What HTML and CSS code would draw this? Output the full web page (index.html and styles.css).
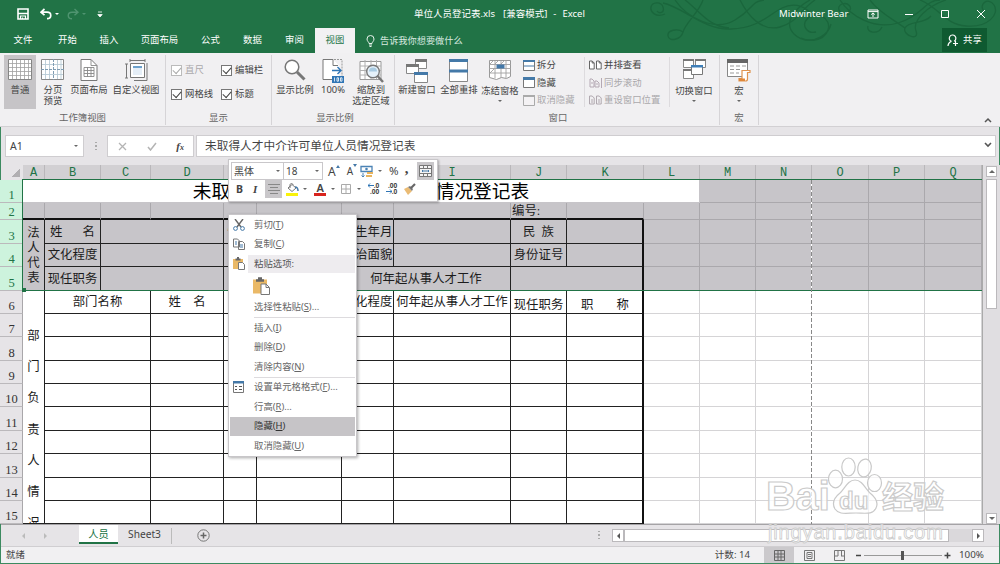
FILE: index.html
```html
<!DOCTYPE html>
<html lang="zh-CN">
<head>
<meta charset="utf-8">
<title>单位人员登记表.xls - Excel</title>
<link rel="stylesheet" href="styles.css">
</head>
<body>
<div class="window">
  <header class="top">
    <svg class="swirls" width="350" height="44" viewBox="0 0 350 44">
      <path d="M15 14C6 18 0 12 1 7s10-6 12 0-4 7-6 4M13 3c20 4 40 27 68 26S118 15 132 8s26 0 30 8M25 0c12 18 40 32 60 20S100 2 114 0M53 0c-4 12-18 24-20 32s-14 10-15 4 10-8 15-4M35 0c14 10 22 26 44 28M90 0c8 16 22 32 40 27s20-17 35-27M160 0c-18 10-26 24-16 34s30 8 34-4-12-20-20-12 0 16 8 14M151 38c14 6 28-4 30-14M200 14c-12 2-14-8-8-10s12 4 6 8M190 0c10 16 34 30 58 23S275 0 290 0M220 0c8 12 24 20 35 28M296 0c-18 6-34 20-30 31s-14 4-11-3 20-4 26-12M270 0c20 8 24 24 46 26s34-12 28-21-16 0-10 6M232 27c-4 8-16 6-14-1"/>
    </svg>
    <div class="titlebar">
      <div class="quick">
        <svg class="save" width="12" height="12" viewBox="0 0 12 12"><path d="M1 1h10v10H1zM1 5.500h10" fill="none" stroke="#fff" stroke-width="1.600"/><path d="M3.500 11V8h5v3M5.500 11V9.500" fill="none" stroke="#fff" stroke-width="1.200"/></svg>
        <svg class="undo" width="12" height="12" viewBox="0 0 12 12"><path d="M4.500 1 1 4.200l3.500 3M1.500 4.200H7c5 0 5 6.500 0 6.500" fill="none" stroke="#fff" stroke-width="1.700"/></svg>
        <i class="caret white"></i>
        <svg class="redo" width="12" height="12" viewBox="0 0 12 12"><path d="M7.500 1 11 4.200l-3.500 3M10.500 4.200H5c-5 0-5 6.500 0 6.500" fill="none" stroke="#4f9470" stroke-width="1.400"/></svg>
        <i class="caret faint"></i>
        <svg class="more" width="6" height="7" viewBox="0 0 6 7"><path d="M1 1h4M.8 3.500h4.400L3 6z" stroke="#fff" fill="#fff" stroke-width=".8"/></svg>
      </div>
      <div class="doc"><span>单位人员登记表.xls</span><span>[兼容模式]</span><span>-</span><span>Excel</span></div>
      <div class="account">Midwinter Bear</div>
      <div class="controls">
        <svg width="12" height="10" viewBox="0 0 12 10"><path d="M1 1h10v8H1zM1 2.600h10M6 8V4M4.200 5.600 6 3.900l1.800 1.700" fill="none" stroke="#fff"/></svg>
        <svg width="12" height="10" viewBox="0 0 12 10"><path d="M2 5.500h8" stroke="#fff"/></svg>
        <svg width="12" height="10" viewBox="0 0 12 10"><path d="M2.500 1.500h7v7h-7z" fill="none" stroke="#fff"/></svg>
        <svg width="12" height="10" viewBox="0 0 12 10"><path d="m2 1 8 8M10 1 2 9" stroke="#fff"/></svg>
      </div>
    </div>
    <nav class="tabs">
      <a class="w46">文件</a><a class="w43">开始</a><a class="w40">插入</a><a class="w61">页面布局</a><a class="w41">公式</a><a class="w43">数据</a><a class="w41">审阅</a><a class="w40 active">视图</a>
      <span class="tell"><svg width="9" height="12" viewBox="0 0 9 12"><path d="M3 8.500C3 7 1 6.300 1 4a3.500 3.500 0 0 1 7 0c0 2.300-2 3-2 4.500zM3 10h3M3.500 11.500h2" fill="none" stroke="#e8f3ec"/></svg>告诉我你想要做什么</span>
      <span class="share"><svg width="12" height="13" viewBox="0 0 12 13"><path d="M1 12c.2-3 1.700-4 3.500-4.600M4.500 7.400a3.300 3.300 0 1 1 2.600-.2M8.500 7v5M6 9.500h5" fill="none" stroke="#fff" stroke-width="1.200"/></svg>共享</span>
    </nav>
  </header>

  <section class="ribbon">
    <div class="group g-views">
      <div class="tools">
        <div class="big w32 pressed"><svg width="24" height="21" viewBox="0 0 24 21"><path d="M.5.500h23v20H.5z" fill="#fff" stroke="#858585"/><path d="M4.500 1v19M8.500 1v19M12.500 1v19M16.500 1v19M20.500 1v19M1 4.500h22M1 8.500h22M1 12.500h22M1 16.500h22" stroke="#a0a0a0" stroke-width=".8"/></svg><span>普通</span></div>
        <div class="big w34"><svg width="24" height="21" viewBox="0 0 24 21"><path d="M.5.500h22v20H.5z" fill="#fff" stroke="#888"/><path d="M4.500 1v19M8.500 1v19M16.500 1v19M20 1v19M1 5.500h21M1 15.500h21" stroke="#b8cbd6" stroke-width=".9"/><path d="M12.500 0v21M0 10.500h23" stroke="#7f9cb2" stroke-dasharray="3 1"/></svg><span>分页<br>预览</span></div>
        <div class="big w38"><svg width="18" height="22" viewBox="0 0 18 22"><path d="M1 .5h10l6 6v15H1z" fill="#fff" stroke="#777"/><path d="M11 .5v6h6M4 8.500h10v9H4zM4 11.500h10M4 14.500h10M7.500 8v10M11 8v10" fill="none" stroke="#888" stroke-width=".9"/></svg><span>页面布局</span></div>
        <div class="big w56"><svg width="23" height="22" viewBox="0 0 23 22"><path d="M5.500 4.500h14v14h-14z" fill="#fff" stroke="#777"/><path d="M8 7h9v2H8z" fill="#6da1cc"/><path d="M8 9h9v7H8z" fill="#e5eef7"/><path d="M5 1.500h15M5 0v3M20 0v3M1.500 5v14M0 5h3M0 19h3M22 4v17.500H9" fill="none" stroke="#777"/></svg><span>自定义视图</span></div>
      </div>
      <div class="name">工作簿视图</div>
    </div>
    <div class="group g-show">
      <div class="checks">
        <label class="off"><i></i>直尺</label><label><i></i>编辑栏</label><label><i></i>网格线</label><label><i></i>标题</label>
      </div>
      <div class="name">显示</div>
    </div>
    <div class="group g-zoom">
      <div class="tools">
        <div class="big w38"><svg width="22" height="22" viewBox="0 0 22 22"><circle cx="8" cy="8" r="6.800" fill="#fff" stroke="#777" stroke-width="1.500"/><path d="m13 13 7.500 7.500" stroke="#777" stroke-width="3"/></svg><span>显示比例</span></div>
        <div class="big w38"><svg width="22" height="24" viewBox="0 0 22 24"><path d="M1 .5h10l6 6v14H1z" fill="#fff"/><path d="M10 20.500H1V.5h10v6h5" fill="none" stroke="#777"/><path d="M12 .5h8v17" stroke="#999" fill="none" stroke-dasharray="2 1"/><path d="M10 11.500h9M15.500 8l3.500 3.500-3.500 3.500" fill="none" stroke="#2f75b5" stroke-width="1.400"/><path d="M10 17h12v7H10z" fill="#2f75b5"/><path d="M12.500 18.500v4M15 18.800h1.500v3.400H15zM18.500 18.800H20v3.400h-1.500z" fill="none" stroke="#fff" stroke-width=".8"/></svg><span>100%</span></div>
        <div class="big w38"><svg width="25" height="24" viewBox="0 0 25 24"><path d="M1 2.500h21v18H1z" fill="#fff" stroke="#999"/><path d="M6 1v19M12 1v19M17.500 1v19M1 7h21M1 11.500h21M1 16h21" stroke="#b0b0b0"/><circle cx="14" cy="12.500" r="6.300" fill="#e5f1fa" stroke="#777" stroke-width="1.400"/><path d="M10 12.500a4 4 0 0 1 8 0z" fill="#a9cbe2"/><path d="m18.500 17 5.500 6" stroke="#777" stroke-width="2.500"/></svg><span>缩放到<br>选定区域</span></div>
      </div>
      <div class="name">显示比例</div>
    </div>
    <div class="group g-window">
      <div class="tools">
        <div class="big w40"><svg width="22" height="24" viewBox="0 0 22 24"><path d="M9.500.500h11v9h-11z" fill="#fff" stroke="#888"/><path d="M9 0h12v3H9z" fill="#777"/><path d="M.5 5.500h12v9H.5z" fill="#fff" stroke="#888"/><path d="M0 5h13v3H0z" fill="#777"/><path d="M8.500 13.500h13v10h-13z" fill="#fff" stroke="#888"/><path d="M8 13h14v3H8z" fill="#4479a8"/></svg><span>新建窗口</span></div>
        <div class="big w44"><svg width="20" height="24" viewBox="0 0 20 24"><path d="M.5.500h18v22H.5z" fill="#fff" stroke="#888"/><path d="M0 0h19v3H0zM0 10.500h19v3H0z" fill="#4479a8"/></svg><span>全部重排</span></div>
        <div class="big w38"><svg width="23" height="22" viewBox="0 0 23 22"><path d="M.5 1.500h21v16l-4 2-5-1-5 2-7-2z" fill="#fff" stroke="#999"/><path d="M6 1v18M12 1v18M17 1v18M0 5.500h22M0 9.500h22M0 14h22M1 5l4-4M6 5l4-4M12 5l4-4M1 14l4-4" stroke="#a0a0a0" stroke-width=".9"/><path d="M7.500 5.500h8v4h-8z" fill="#4479a8"/></svg><span>冻结窗格</span><i class="caret"></i></div>
        <div class="small s1">
          <div><svg width="12" height="11" viewBox="0 0 12 11"><path d="M.5.500h11v10H.5z" fill="#fff" stroke="#777"/><path d="M0 0h12v2H0z" fill="#4479a8"/><path d="M1 6h10" stroke="#4479a8"/></svg>拆分</div>
          <div><svg width="12" height="11" viewBox="0 0 12 11"><path d="M.5.500h11v10H.5z" fill="#fff" stroke="#777"/><path d="M0 0h12v3H0z" fill="#4479a8"/></svg>隐藏</div>
          <div class="off"><svg width="12" height="11" viewBox="0 0 12 11"><path d="M.5.500h11v10H.5z" fill="#f4f2f4" stroke="#aaa"/><path d="M0 0h12v2H0z" fill="#aaa"/></svg>取消隐藏</div>
        </div>
        <div class="small s2">
          <div><svg width="13" height="10" viewBox="0 0 13 10"><path d="M.5 1h2.700l2 2v6H.5zM7.500 1h2.700l2 2v6H7.500zM3.200 1v2h2M10.200 1v2h2" fill="#fff" stroke="#666"/></svg>并排查看</div>
          <div class="off"><svg width="13" height="10" viewBox="0 0 13 10"><path d="M1 1h2l2 2v6H1zM6 3h2l2 2v4H6zM12.500 0v10M2 5h2M7 6h2" fill="none" stroke="#b5a9b4"/></svg>同步滚动</div>
          <div class="off"><svg width="13" height="10" viewBox="0 0 13 10"><path d="M.5 1h2.700l2 2v6H.5zM7.500 1h2.700l2 2v6H7.500zM2 5h2M9 5h2M2 7h2M9 7h2" fill="none" stroke="#b0a8af"/></svg>重设窗口位置</div>
        </div>
        <div class="big w48"><svg width="23" height="20" viewBox="0 0 23 20"><path d="M.5.500h10v8H.5zM12.500.500h10v8h-10zM.5 10.500h10v9H.5z" fill="#fff" stroke="#888"/><path d="M0 0h11v2H0zM12 0h11v2H12zM0 10h11v2H0z" fill="#777"/><path d="M8.500 6.500h11v9h-11z" fill="#fff" stroke="#777"/><path d="M8 6h12v2.500H8z" fill="#3f7fb8"/></svg><span>切换窗口</span><i class="caret"></i></div>
      </div>
      <div class="name">窗口</div>
    </div>
    <div class="group g-macro">
      <div class="tools">
        <div class="big w38"><svg width="24" height="23" viewBox="0 0 24 23"><path d="M.5.500h20v17H.5z" fill="#fff" stroke="#888"/><path d="M0 0h21v4H0z" fill="#666"/><path d="M3 7h4M9 7h4M15 7h4M3 10.500h4M9 10.500h4M3 14h4M9 14h3" stroke="#999"/><path d="M15 11.500h8v2h-2.500V20c0 1.500-1 2-2 2H12v-2.500h3z" fill="#fff" stroke="#e0944f" stroke-width="1.200"/><path d="M12 19.500h6V22h-6z" fill="#e0883a"/></svg><span>宏</span><i class="caret"></i></div>
      </div>
      <div class="name">宏</div>
    </div>
    <svg class="collapse" width="8" height="6" viewBox="0 0 8 6"><path d="m1 5 3-3 3 3" fill="none" stroke="#555" stroke-width="1.500"/></svg>
  </section>

  <section class="formula">
    <div class="namebox">A1<i class="caret"></i></div>
    <div class="dots"></div>
    <div class="fx">
      <svg width="9" height="9" viewBox="0 0 9 9"><path d="m1 1 7 7M8 1 1 8" stroke="#b4b4b4" stroke-width="1.300"/></svg>
      <svg width="10" height="9" viewBox="0 0 10 9"><path d="m1 5 2.500 3L9 1" fill="none" stroke="#b4b4b4" stroke-width="1.500"/></svg>
      <em>f<small>x</small></em>
    </div>
    <div class="input">未取得人才中介许可单位人员情况登记表<svg width="8" height="6" viewBox="0 0 8 6"><path d="m1 1 3 3 3-3" fill="none" stroke="#555" stroke-width="1.600"/></svg></div>
  </section>

  <main class="work">
    <div class="sheet" id="sheet">
      <div class="selection"></div>
      <div class="pagebreak"></div>
    </div>
    <div class="vscroll"><i class="up"></i><b></b><i class="down"></i></div>

    <div class="mini">
      <div class="line">
        <span class="combo font">黑体<i class="caret"></i></span><span class="combo size">18<i class="caret"></i></span>
        <span class="grow big-a">A<i></i></span><span class="grow small-a">A<i></i></span>
        <svg class="money" width="14" height="13" viewBox="0 0 14 13"><path d="M1 1.500h11v5H1z" fill="#fff" stroke="#4b83b5" stroke-width="1.300"/><circle cx="6.500" cy="4" r="1.300" fill="#4b83b5"/><path d="M7 7h6v2H7zM6 10h6v2H6z" fill="#e9b45e"/><path d="M3 8v4M1.500 10.500 3 12l1.500-1.500" stroke="#4b83b5" fill="none"/></svg><i class="caret"></i>
        <span class="pct">%</span><span class="comma">,</span>
        <span class="merge"><svg width="13" height="12" viewBox="0 0 13 12"><path d="M.5.500h12v11H.5z" fill="#f4f4f4" stroke="#777"/><path d="M1 3.500h11M1 8.500h11M4.500 1v2.500M8.500 1v2.500M4.500 9v2.500M8.500 9v2.500" fill="none" stroke="#777"/><path d="M3 6h7M4 5 3 6l1 1M9 5l1 1-1 1" stroke="#4479a8" fill="none"/></svg></span>
      </div>
      <div class="line two">
        <b class="bold">B</b><em class="italic">I</em>
        <span class="center"><svg width="12" height="10" viewBox="0 0 12 10"><path d="M0 .5h12M2 3.500h8M0 6.500h12M2 9.500h8" stroke="#888"/></svg></span>
        <svg class="fill" width="14" height="13" viewBox="0 0 14 13"><path d="m3 5 4-3.500L11 5 7 8.500z" fill="#fff" stroke="#777"/><path d="M5 5V2c0-2 3-2 3 0" fill="none" stroke="#777"/><path d="M10 4c2 0 3 2 3 4" stroke="#4479a8" stroke-width="1.500" fill="none"/><path d="M1 10h12v3H1z" fill="#f9f20a"/></svg><i class="caret"></i>
        <span class="color">A</span><i class="caret"></i>
        <svg class="borders" width="12" height="12" viewBox="0 0 12 12"><path d="M1.500 1.500h9v9h-9zM6 1v10M1 6h10" fill="none" stroke="#aaa"/></svg><i class="caret"></i>
        <span class="dec"><svg width="6" height="5" viewBox="0 0 6 5"><path d="M0 2.500h6M2 .5l-2 2 2 2" fill="none" stroke="#2f75b5"/></svg>.0<br>.00</span><span class="dec">.00<br><svg width="6" height="5" viewBox="0 0 6 5"><path d="M0 2.500h6M4 .5l2 2-2 2" fill="none" stroke="#2f75b5"/></svg>.0</span>
        <svg class="brush" width="13" height="12" viewBox="0 0 13 12"><path d="m1 6 4-2 4 4-4 4z" fill="#eabb74"/><path d="m5 4 2-1 3 3-1 2z" fill="#777"/><path d="m8 5 4-4" stroke="#666" stroke-width="2.200"/></svg>
      </div>
    </div>

    <div class="menu">
      <div class="item"><svg width="12" height="12" viewBox="0 0 12 12"><path d="m2 0 6 8M10 0 4 8" stroke="#666" stroke-width="1.400"/><circle cx="2.500" cy="9.500" r="1.900" fill="none" stroke="#4479a8"/><circle cx="9.500" cy="9.500" r="1.900" fill="none" stroke="#4479a8"/></svg>剪切(<u>T</u>)</div>
      <div class="item"><svg width="12" height="12" viewBox="0 0 12 12"><path d="M.5 1h4l2 2v6h-6zM5.500 3.500h4l2 2v6h-6z" fill="#fff" stroke="#777"/><path d="M2 4h2M2 6h2M7 7h3M7 9h3" stroke="#4479a8"/></svg>复制(<u>C</u>)</div>
      <div class="item head"><svg width="12" height="13" viewBox="0 0 12 13"><path d="M0 2h10v10H0z" fill="#eab967"/><path d="M2.500 2.500h5M4 1h2" stroke="#666" stroke-width="2"/><path d="M5.500 5.500h4l2 2v5h-6z" fill="#fff" stroke="#777"/></svg><span>粘贴选项:</span></div>
      <div class="paste"><svg width="17" height="18" viewBox="0 0 17 18"><path d="M0 2.500h14v14H0z" fill="#eab967"/><path d="M3 3.500h8M5 1.500h4" stroke="#666" stroke-width="2.500"/><path d="M8 7h5l3.500 3.500v7H8z" fill="#fff" stroke="#777"/><path d="M13 7v3.500h3" fill="none" stroke="#777"/></svg></div>
      <div class="item">选择性粘贴(<u>S</u>)...</div>
      <hr>
      <div class="item">插入(<u>I</u>)</div>
      <div class="item">删除(<u>D</u>)</div>
      <div class="item">清除内容(<u>N</u>)</div>
      <hr>
      <div class="item"><svg width="11" height="12" viewBox="0 0 11 12"><path d="M.5.500h10v11H.5z" fill="#fff" stroke="#777"/><path d="M0 0h11v2.500H0z" fill="#4479a8"/><path d="M2 5.500h2M6 5.500h3M2 8.500h2M6 8.500h3" stroke="#555" stroke-width="1.200"/></svg>设置单元格格式(<u>F</u>)...</div>
      <div class="item">行高(<u>R</u>)...</div>
      <div class="item hot">隐藏(<u>H</u>)</div>
      <div class="item">取消隐藏(<u>U</u>)</div>
    </div>
  </main>

  <section class="sheets">
    <i class="prev"></i><i class="next"></i>
    <span class="tab on">人员</span><span class="tab">Sheet3</span><span class="bar"></span>
    <svg class="add" width="13" height="13" viewBox="0 0 13 13"><circle cx="6.500" cy="6.500" r="5.700" fill="none" stroke="#777"/><path d="M6.500 3.500v6M3.500 6.500h6" stroke="#666" stroke-width="1.500"/></svg>
    <div class="dots"></div>
    <div class="hscroll"><i class="left"></i><b></b><i class="right"></i></div>
  </section>

  <footer class="status">
    <span class="ready">就绪</span><span class="count">计数: 14</span>
    <span class="view on"><svg width="11" height="11" viewBox="0 0 11 11"><path d="M.5.500h10v10H.5zM4 0v11M7 0v11M0 4h11M0 7h11" fill="none" stroke="#666"/></svg></span>
    <span class="view"><svg width="11" height="11" viewBox="0 0 11 11"><path d="M.5.500h10v10H.5zM3 2.500h5v6H3zM4 4.500h3M4 6.500h3" fill="none" stroke="#777"/></svg></span>
    <span class="view"><svg width="11" height="11" viewBox="0 0 11 11"><path d="M.5.500h10v10H.5zM4 1v5M7.500 1v5M4 6H1M7 6h3" fill="none" stroke="#777"/></svg></span>
    <svg class="slider" width="96" height="11" viewBox="0 0 96 11"><path d="M1 5.500h5M89.500 5.500h6M92.500 2.500v6" stroke="#444" stroke-width="1.500"/><path d="M9 5.500h78" stroke="#999"/><path d="M46 1h3v9h-3z" fill="#555"/></svg>
    <span class="percent">100%</span>
  </footer>

  <div class="mark">
    <span class="bai">Bai</span>
    <svg width="56" height="58" viewBox="0 0 56 58"><g fill="#fff" fill-opacity=".7" stroke="#c9c9c9" stroke-width="1.200"><ellipse cx="7.500" cy="22" rx="7" ry="8.800"/><ellipse cx="20.500" cy="10" rx="6.700" ry="9"/><ellipse cx="36.500" cy="11" rx="6.700" ry="9" transform="rotate(12 36.500 11)"/><ellipse cx="46.500" cy="26" rx="7" ry="8.500"/><path d="M27 23c7 0 10 8 15 13 5 4 9 9 6 15-3 7-11 5-20 5-10 0-17 2-21-4-4-7 0-12 5-16 5-5 8-13 15-13z"/></g></svg>
    <span class="du">du</span>
    <span class="jy">经验</span>
    <span class="url">jingyan.baidu.com</span>
  </div>
</div>
<script src="sheet.js"></script>
</body>
</html>
```

FILE: sheet.js
```js
const sheet = document.getElementById('sheet');
const letters = ['A', 'B', 'C', 'D', 'E', 'F', 'H', 'I', 'J', 'K', 'L', 'M', 'N', 'O', 'P', 'Q'];

// Adds one cell; c and r are 1-based grid tracks, where track 1 holds the headers.
function put(c, r, text, cls, cs = 1, rs = 1) {
  const el = document.createElement('div');
  el.className = cls;
  el.textContent = text;
  el.style.gridArea = `${r} / ${c} / span ${rs} / span ${cs}`;
  sheet.appendChild(el);
  return el;
}

put(1, 1, '', 'corner');
letters.forEach((l, i) => put(i + 2, 1, l, 'colhead'));
for (let r = 1; r <= 15; r++) put(1, r + 1, r, r < 6 ? 'rowhead picked' : 'rowhead');

put(2, 2, '未取得人才中介许可单位人员情况登记表', 'cell title', 11);
for (let c = 13; c <= 17; c++) put(c, 2, '', 'cell sel');
for (let c = 2; c <= 17; c++) {
  put(c, 3, c === 10 ? '编号:' : '', 'cell sel' + (c < 12 ? ' heavy' : '') + (c === 10 ? ' note' : ''));
}
for (let r = 4; r <= 16; r++) {
  for (let c = 12; c <= 17; c++) put(c, r, '', r < 7 ? 'cell sel' : 'cell');
}

function vertical(r, text, cls, rs) {
  const el = put(2, r, '', cls, 1, rs);
  for (const ch of text) {
    const s = document.createElement('span');
    s.textContent = ch;
    el.appendChild(s);
  }
}
vertical(4, '法人代表', 'cell sel ink stack', 3);
vertical(7, '部门负责人情况', 'cell ink stack long', 10);

// Top block: [column, row, text, column span, extra class]
[
  [3, 4, '姓名', 1, 'spread'], [4, 4, '', 2], [6, 4, '性别', 1], [7, 4, '', 1], [8, 4, '出生年月', 1], [9, 4, '', 1], [10, 4, '民 族', 1, 'wide'], [11, 4, '', 1, 'edge'],
  [3, 5, '文化程度', 1], [4, 5, '', 2], [6, 5, '', 1], [7, 5, '', 1], [8, 5, '政治面貌', 1], [9, 5, '', 1], [10, 5, '身份证号', 1], [11, 5, '', 1, 'edge'],
  [3, 6, '现任职务', 1], [4, 6, '', 2], [6, 6, '', 2], [8, 6, '何年起从事人才工作', 2], [10, 6, '', 2, 'edge'],
].forEach(([c, r, t, span, x]) => put(c, r, t, 'cell sel ink ' + (x || ''), span));

const heads = [[3, '部门名称', 2], [5, '姓　名', 1], [6, '', 1], [7, '', 1], [8, '文化程度', 1], [9, '何年起从事人才工作', 1], [10, '现任职务', 1, 'low'], [11, '职称', 1, 'edge spread apart']];
for (let r = 7; r <= 16; r++) {
  heads.forEach(([c, t, span, x]) => put(c, r, r === 7 ? t : '', 'cell ink ' + (x || ''), span));
}
```

FILE: styles.css
```css
* { box-sizing: border-box; }
body { margin: 0; font-family: "Noto Sans", "Noto Sans CJK SC", sans-serif; font-size: 9.400px; color: #444; line-height: 12px; overflow: hidden; }
svg { flex: none; display: block; }
.window { position: relative; width: 1000px; height: 564px; display: flex; flex-direction: column; background: #e6e4e7; outline: 1px solid #3c8a60; outline-offset: -1px; overflow: hidden; }

.caret { flex: none; width: 0; height: 0; border: 2.500px solid transparent; border-top-color: #666; border-bottom: 0; }
.caret.white { border-top-color: #fff; }
.caret.faint { border-top-color: #4f9470; }

/* title bar and ribbon tabs */
.top { position: relative; height: 53px; background: #217346; color: #fff; flex: none; }
.swirls { position: absolute; left: 650px; top: 0; fill: none; stroke: #1a663c; stroke-width: 1.300; }
.titlebar { position: relative; height: 28px; display: flex; align-items: center; }
.quick { width: 414px; padding-left: 17px; display: flex; align-items: center; }
.undo { margin-left: 11px; }
.quick .caret { margin-left: 3px; }
.redo { margin-left: 8px; }
.more { margin-left: 11px; }
.doc { width: 365px; display: flex; font-size: 9.500px; white-space: nowrap; }
.doc span:nth-child(2) { margin-left: 8px; }
.doc span:nth-child(3) { margin: 0 6px 0 6px; }
.account { width: 70px; font-size: 9.600px; white-space: nowrap; }
.controls { margin-left: 18px; display: flex; gap: 24px; }
.tabs { position: relative; height: 25px; display: flex; align-items: stretch; }
.tabs a { display: flex; align-items: center; justify-content: center; padding-bottom: 2px; }
.tabs .active { background: #f2f1f3; color: #217346; }
.w46 { width: 46px; } .w43 { width: 43px; } .w40 { width: 40px; } .w61 { width: 61px; } .w41 { width: 41px; }
.tell { display: flex; align-items: center; gap: 5px; margin-left: 11px; color: #d9eae0; font-size: 9.200px; }
.share { margin-left: auto; margin-right: 13px; width: 45px; height: 24px; background: #0f5a31; display: flex; align-items: center; justify-content: center; gap: 4px; }

/* ribbon */
.ribbon { height: 74px; flex: none; background: #f1f0f2; border-bottom: 1px solid #d2d0d3; display: flex; padding-top: 2px; position: relative; }
.group { position: relative; height: 70px; display: flex; flex-direction: column; border-right: 1px solid #d6d4d7; }
.g-views { width: 166px; padding-left: 4px; }
.g-show { width: 106px; }
.g-zoom { width: 123px; padding-left: 4px; }
.g-window { width: 325px; padding-left: 2px; }
.g-macro { width: 39px; }
.tools { height: 55px; display: flex; }
.name { text-align: center; color: #666; line-height: 13px; margin-top: 1px; }
.g-views .name { margin-left: -4px; }
.big { display: flex; flex-direction: column; align-items: center; padding-top: 4px; text-align: center; white-space: nowrap; line-height: 11px; height: 54px; }
.big svg { margin-bottom: auto; }
.big span { height: 25px; }
.big .caret { margin: -10px 0 7px; }
.pressed { background: #c6c4c7; }
.w32 { width: 32px; } .w34 { width: 34px; } .w38 { width: 38px; } .w56 { width: 56px; } .w44 { width: 44px; } .w48 { width: 48px; }
.checks { height: 55px; display: grid; grid-template-columns: 50px auto; grid-template-rows: 24px 24px; padding: 3px 0 0 5px; }
.checks label { display: flex; align-items: center; gap: 4px; }
.checks i { width: 11px; height: 11px; border: 1px solid #777; background: #fff; display: flex; align-items: center; justify-content: center; margin-right: -1px; }
.checks i::after { content: ""; width: 7px; height: 4px; border: solid #444; border-width: 0 0 1.200px 1.200px; transform: translateY(-1px) rotate(-48deg); }
.off { color: #aaa8ab; }
.checks .off i { border-color: #bbb; }
.checks .off i::after { border-color: #aaa; }
.small { display: flex; flex-direction: column; justify-content: space-between; height: 50px; margin-top: 2px; padding: 2px 0 1px; white-space: nowrap; border-right: 1px solid #dddbde; }
.small div { display: flex; align-items: center; gap: 2px; }
.s1 { width: 62px; margin-left: 4px; }
.s2 { width: 85px; padding-left: 4px; }
.collapse { position: absolute; right: 8px; bottom: 3px; }

/* formula bar */
.formula { height: 38px; flex: none; display: flex; align-items: center; padding: 0 4px 0 5px; }
.namebox, .fx, .input { height: 22px; background: #fff; border: 1px solid #cfcdd0; display: flex; align-items: center; }
.namebox { width: 79px; padding: 0 5px 0 4px; justify-content: space-between; font-size: 10.500px; }
.dots { width: 2px; height: 9px; background: repeating-linear-gradient(#aaa 0 1.500px, transparent 1.500px 3.500px); margin: 0 10px 0 11px; }
.fx { width: 87px; justify-content: space-between; padding: 0 9px 0 10px; }
.fx em { font: italic bold 11px "Liberation Serif", serif; }
.fx small { font-size: 8px; }
.input { flex: 1; margin-left: 2px; padding: 0 3px 2px 8px; justify-content: space-between; font-size: 11.700px; line-height: 16px; color: #444; }

/* worksheet */
.work { position: relative; height: 359px; flex: none; display: flex; }
.sheet { position: relative; width: 982px; height: 359px; display: grid; grid-template-columns: 23px 22px 56px 50px 73px 33px 85px 52px 117px 56px 77px 56px 56px 56px 57px 56px 57px; grid-template-rows: 15px 23px 17px 24px 23px 24px 23px 23px 24px 23px 23px 24px 23px 24px 23px 23px; font-family: "Liberation Serif", "Noto Sans CJK SC", serif; color: #1c1c1c; overflow: hidden; }
.corner { background: linear-gradient(135deg, transparent 50%, #b1afb2 50%) 11px 3px / 9px 9px no-repeat; }
.colhead { background: #d2d0d3; border-right: 1px solid #b9b7ba; color: #217346; font-family: "Liberation Mono", monospace; font-size: 12px; line-height: 16px; text-align: center; }
.rowhead { background: #e6e4e7; border-right: 1px solid #a9a7aa; border-bottom: 1px solid #bbb9bc; color: #333; font-size: 12.500px; line-height: 13px; display: flex; align-items: flex-end; justify-content: center; padding-left: 1px; }
.rowhead.picked { background: #cdf3dd; color: #217346; border-right-color: #217346; }
.cell { background: #fff; border: solid #d5d4d6; border-width: 0 1px 1px 0; font-size: 12.400px; display: flex; align-items: center; justify-content: center; white-space: nowrap; overflow: hidden; line-height: 16px; min-width: 0; min-height: 0; }
.cell.sel { background: #c7c5c9; border-color: #aaa8ac; }
.cell.title { font-size: 18.700px; color: #000; line-height: 22px; padding-top: 2px; border-color: #c7c5c9; }
.cell.heavy { border-bottom: 2px solid #111; }
.cell.note { justify-content: flex-start; padding-left: 1px; }
.cell.ink { border-color: #222; }
.cell.edge { border-right: 2px solid #111; }
.cell.spread { display: block; padding: 4px 5px; text-align: justify; text-align-last: justify; text-justify: inter-character; }
.cell.spread.apart { padding: 6px 13px 0 14px; }
.cell.wide { word-spacing: 3px; }
.cell.low { align-items: flex-end; line-height: 15px; }
.cell.stack { flex-direction: column; justify-content: center; line-height: 15px; padding-top: 2px; }
.cell.long { line-height: 31.200px; justify-content: flex-start; padding-top: 30px; }
.selection { position: absolute; left: 22px; top: 14px; width: 970px; height: 112px; border: 1.500px solid #217346; z-index: 1; }
.selection::after { content: ""; position: absolute; left: -1px; bottom: -2px; width: 4px; height: 4px; background: #217346; }
.pagebreak { position: absolute; left: 811px; top: 15px; height: 344px; width: 1px; background: repeating-linear-gradient(#888 0 4px, #fff 4px 6px); z-index: 1; }
.vscroll { width: 18px; background: #e0dee1; padding: 1px 4px 0 3px; display: flex; flex-direction: column; border-left: 1px solid #aaa; }
.vscroll i, .hscroll i { background: #fff; border: 1px solid #bbb9bc; display: flex; align-items: center; justify-content: center; }
.vscroll i { width: 11px; height: 11px; }
.vscroll b { width: 11px; height: 130px; background: #fff; border: 1px solid #bbb9bc; margin: 2px 0 auto; }
.vscroll i::after, .hscroll i::after { content: ""; border: 3px solid transparent; }
.vscroll .up::after { border-bottom-color: #666; border-top: 0; }
.vscroll .down::after { border-top-color: #666; border-bottom: 0; }

/* floating format toolbar */
.mini { position: absolute; z-index: 3; left: 228px; top: -6px; width: 210px; height: 43px; background: #fff; border: 1px solid #c8c6c9; box-shadow: 1px 1px 2px #0004; padding: 2px 3px 0 2px; }
.line { display: flex; align-items: center; height: 18px; }
.combo { height: 18px; border: 1px solid #c9c7ca; display: flex; align-items: center; justify-content: space-between; padding: 0 3px 0 2px; font-size: 10px; }
.font { width: 53px; } .size { width: 39px; border-left: 0; }
.grow { position: relative; font: 12px "Noto Sans", sans-serif; margin-left: 5px; padding-right: 4px; }
.grow i { position: absolute; right: 0; top: 2px; border: 2px solid transparent; border-bottom: 3px solid #4479a8; border-top: 0; }
.small-a { font-size: 10px; margin-left: 7px; }
.small-a i { border: 2px solid transparent; border-top: 3px solid #4479a8; border-bottom: 0; top: 0; }
.money { margin: 0 4px 0 3px; }
.pct { font-size: 11.500px; margin-left: 7px; }
.comma { font: bold 15px/8px "Liberation Serif", serif; margin: -6px 0 0 6px; }
.merge, .center { background: #c9c7ca; display: flex; align-items: center; justify-content: center; height: 18px; }
.merge { width: 17px; margin-left: auto; }
.bold { margin-left: 5px; font-size: 10.500px; }
.italic { font: italic bold 11px "Liberation Serif", serif; margin: 0 8px 0 10px; }
.center { width: 17px; }
.fill { margin: 0 4px 0 3px; }
.color { width: 12px; height: 13px; border-bottom: 3px solid #d8241e; font-weight: 600; text-align: center; line-height: 10px; margin: 0 5px 0 7px; font-size: 11px; }
.borders { margin: 0 5px 0 5px; }
.dec { font-size: 6.500px; line-height: 6.500px; font-weight: 700; width: 13px; margin-left: 5px; white-space: nowrap; text-align: right; }
.dec svg { display: inline-block; vertical-align: 0; }
.brush { margin-left: 6px; }

/* context menu */
.menu { position: absolute; z-index: 3; left: 228px; top: 49px; width: 129px; height: 243px; background: #fff; border: 1px solid #c8c6c9; box-shadow: 1px 1px 3px #0005; padding: 0 1px; color: #666; }
.item { position: relative; height: 19.500px; display: flex; align-items: center; padding-left: 24px; white-space: nowrap; }
.item svg { margin-left: -21px; margin-right: 9px; }
.item svg[width="11"] { margin-right: 10px; }
.item.head span { flex: 1; background: #eeecef; line-height: 18px; margin-left: -6px; padding-left: 6px; color: #555; }
.item.hot { background: #c6c4c7; color: #333; }
.paste { height: 24px; padding: 3px 0 0 23px; }
.menu hr { margin: 0 0 0 24px; border: 0; height: 1px; background: #dddbde; }

/* sheet tabs */
.sheets { height: 22px; flex: none; display: flex; align-items: center; border-top: 1px solid #a5a3a6; padding-right: 16px; }
.prev, .next { border: 3px solid transparent; }
.prev { border-right-color: #bbb; border-left: 0; margin-left: 22px; }
.next { border-left-color: #bbb; border-right: 0; margin-left: 19px; }
.tab { height: 19px; line-height: 18px; align-self: flex-start; font-size: 10.200px; width: 53px; text-align: center; }
.tab.on { background: #fff; color: #217346; border-bottom: 2px solid #217346; margin-left: 32px; width: 39px; }
.bar { width: 1px; height: 16px; background: #bbb; }
.add { margin-left: 25px; }
.sheets .dots { margin: 0 12px 0 auto; }
.hscroll { width: 372px; height: 13px; display: flex; background: #dad8db; }
.hscroll i { width: 12px; }
.hscroll b { width: 325px; background: #fff; border: 1px solid #bbb9bc; margin-right: auto; }
.hscroll .left::after { border-right-color: #555; border-left: 0; }
.hscroll .right::after { border-left-color: #555; border-right: 0; }

/* status bar */
.status { height: 18px; flex: none; background: #f1f0f2; border-top: 1px solid #d0ced1; display: flex; align-items: center; padding: 0 15px 1px 6px; }
.count { margin-left: auto; margin-right: 14px; font-size: 9.600px; }
.view { width: 30px; height: 16px; display: flex; align-items: center; justify-content: center; }
.view.on { background: #cbc9cc; }
.slider { margin-left: 1px; }
.percent { margin-left: 8px; font-size: 9.800px; width: 26px; white-space: nowrap; }

/* watermark */
.mark { position: absolute; z-index: 5; left: 768px; top: 456px; width: 180px; height: 88px; color: #ffffffc8; -webkit-text-stroke: 1.200px #cbcbcb; font-family: "Liberation Sans", "Noto Sans CJK SC", sans-serif; font-weight: 700; white-space: nowrap; }
.mark > * { position: absolute; }
.bai { left: -2px; top: 18px; font-size: 41px; line-height: 44px; }
.mark svg { left: 60px; top: 1px; }
.du { left: 71px; top: 32px; font-size: 24px; line-height: 26px; }
.jy { left: 114px; top: 24px; font-size: 31px; line-height: 36px; }
.url { left: 0; top: 64px; font-size: 20px; line-height: 24px; font-weight: 400; letter-spacing: .850px; -webkit-text-stroke-width: .8px; }
```
